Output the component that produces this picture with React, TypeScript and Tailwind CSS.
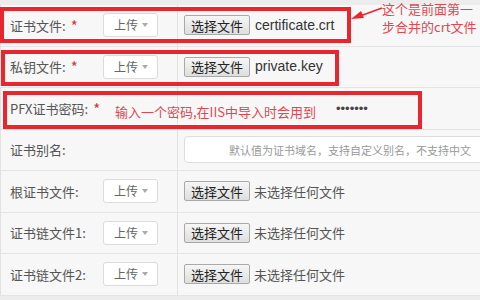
import React from 'react';

type Row = {
  label: string;
  required?: boolean;
  kind: 'file' | 'password' | 'alias';
  file?: string;
};

const rows: Row[] = [
  { label: '证书文件:', required: true, kind: 'file', file: 'certificate.crt' },
  { label: '私钥文件:', required: true, kind: 'file', file: 'private.key' },
  { label: 'PFX证书密码:', required: true, kind: 'password' },
  { label: '证书别名:', kind: 'alias' },
  { label: '根证书文件:', kind: 'file' },
  { label: '证书链文件1:', kind: 'file' },
  { label: '证书链文件2:', kind: 'file' },
];

function UploadSelect() {
  return (
    <div className="absolute left-[102px] top-1/2 -translate-y-1/2 flex h-[24px] w-[55px] items-center justify-between rounded-[3px] border border-[#dcdcdc] bg-white pl-[10px] pr-[9px] text-[12px] text-[#666]">
      <span>上传</span>
      <svg width="6" height="4" viewBox="0 0 6 4">
        <polygon points="0,0 6,0 3,4" fill="#aaa" />
      </svg>
    </div>
  );
}

function FileButton() {
  return (
    <div className="flex h-[20px] items-center rounded-[2px] border border-[#a9a9a9] bg-gradient-to-b from-[#f6f6f6] to-[#dedede] px-[6px] text-[13px] text-[#222]">
      选择文件
    </div>
  );
}

export default function App() {
  return (
    <div
      className="relative h-[300px] w-[480px] overflow-hidden bg-[#ececec] pt-[5px]"
      style={{ fontFamily: '"Noto Sans CJK SC", "Noto Sans", sans-serif' }}
    >
      <div className="border-l border-[#e2e2e2] bg-[#f7f7f7]">
        {rows.map((row) => (
          <div key={row.label} className="flex h-[41.5px] border-b border-[#e4e4e4]">
            <div className="relative flex w-[177px] shrink-0 items-center border-r border-[#e2e2e2] pl-[9px] text-[13px] text-[#555]">
              <span>{row.label}</span>
              {row.required && <span className="ml-[5px] text-[15px] leading-none text-[#d9343a]">*</span>}
              {row.kind === 'file' && <UploadSelect />}
            </div>
            <div className="flex flex-1 items-center pl-[6px]">
              {row.kind === 'file' && (
                <>
                  <FileButton />
                  {row.file ? (
                    <span className="ml-[5px] font-['Liberation_Sans',sans-serif] text-[14px] text-[#333]">{row.file}</span>
                  ) : (
                    <span className="ml-[4px] text-[13px] text-[#555]">未选择任何文件</span>
                  )}
                </>
              )}
              {row.kind === 'password' && (
                <span className="ml-[152px] font-['Liberation_Sans',sans-serif] text-[13px] text-[#444]">•••••••</span>
              )}
              {row.kind === 'alias' && (
                <div className="-mr-[10px] flex h-[27px] flex-1 items-center justify-end rounded-[4px] border border-[#dddddd] bg-white pr-[18px] text-[11px] text-[#999]">
                  默认值为证书域名，支持自定义别名，不支持中文
                </div>
              )}
            </div>
          </div>
        ))}
      </div>

      {/* annotation note in row 3 */}
      <span className="absolute left-[115px] top-[102px] text-[13px] text-[#e2474f]">
        输入一个密码,在IIS中导入时会用到
      </span>

      {/* red highlight boxes */}
      <div className="absolute left-0 top-[7px] h-[36px] w-[351px] border-[4px] border-[#e8262d]" />
      <div className="absolute left-[1px] top-[50px] h-[36px] w-[338px] border-[4px] border-[#e8262d]" />
      <div className="absolute left-[3px] top-[91px] h-[38px] w-[419px] border-[4px] border-[#e8262d]" />

      {/* callout */}
      <svg className="absolute left-[348px] top-[4px]" width="36" height="20" viewBox="0 0 36 20">
        <line x1="34" y1="4" x2="12" y2="12" stroke="#e8262d" strokeWidth="1.6" />
        <polygon points="3,15 13,7 16,14" fill="#e8262d" />
      </svg>
      <div className="absolute left-[382px] top-0 whitespace-nowrap text-[13px] leading-[18px] text-[#e2474f]">
        <div>这个是前面第一</div>
        <div>步合并的crt文件</div>
      </div>
    </div>
  );
}
